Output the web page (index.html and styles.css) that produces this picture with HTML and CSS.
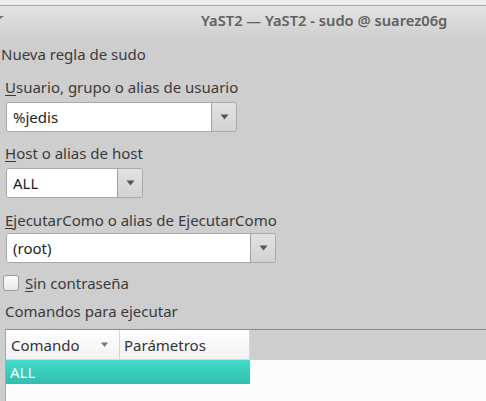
FILE: index.html
```html
<!DOCTYPE html>
<html lang="es">
<head>
<meta charset="utf-8">
<title>YaST2 - sudo</title>
<link rel="stylesheet" href="styles.css">
</head>
<body>
<div class="topstrip"></div>
<header class="titlebar">
  <svg class="menu-mark" width="4" height="4" viewBox="0 0 4 4"><path d="M0 0H4L0 3Z" fill="#777"/></svg>
  <span class="title">YaST2 — YaST2 - sudo @ suarez06g</span>
</header>
<main class="content">
  <div class="heading">Nueva regla de sudo</div>

  <div class="label label-user"><u>U</u>suario, grupo o alias de usuario</div>
  <div class="combo combo-user">
    <div class="combo-text">%jedis</div>
    <div class="combo-btn"><svg width="9" height="6" viewBox="0 0 9 6"><path d="M0.5 0.5H8.5L4.5 5.5Z" fill="#555"/></svg></div>
  </div>

  <div class="label label-host"><u>H</u>ost o alias de host</div>
  <div class="combo combo-host">
    <div class="combo-text">ALL</div>
    <div class="combo-btn"><svg width="9" height="6" viewBox="0 0 9 6"><path d="M0.5 0.5H8.5L4.5 5.5Z" fill="#555"/></svg></div>
  </div>

  <div class="label label-runas"><u>E</u>jecutarComo o alias de EjecutarComo</div>
  <div class="combo combo-runas">
    <div class="combo-text">(root)</div>
    <div class="combo-btn"><svg width="9" height="6" viewBox="0 0 9 6"><path d="M0.5 0.5H8.5L4.5 5.5Z" fill="#555"/></svg></div>
  </div>

  <label class="check-row">
    <span class="checkbox"></span>
    <span class="check-label"><u>S</u>in contraseña</span>
  </label>

  <div class="label label-cmds">Comandos para ejecutar</div>
  <div class="table">
    <div class="thead">
      <div class="th th-cmd"><span>Comando</span><svg width="9" height="6" viewBox="0 0 9 6"><path d="M1 0.5H8L4.5 5Z" fill="#777"/></svg></div>
      <div class="th th-params">Parámetros</div>
    </div>
    <div class="tbody">
      <div class="row row-selected"><div class="td">ALL</div></div>
    </div>
  </div>
</main>
</body>
</html>
```

FILE: styles.css
```css
* { box-sizing: border-box; }
html, body {
  margin: 0;
  padding: 0;
  width: 486px;
  height: 401px;
  overflow: hidden;
}
body {
  background: #cecece;
  font-family: "Noto Sans", "DejaVu Sans", sans-serif;
  font-size: 15px;
  line-height: 20px;
  color: #3a3a3a;
}
u { text-decoration-thickness: 1px; text-underline-offset: 2px; }

.topstrip {
  height: 6px;
  background: #efefef;
  border-bottom: 1px solid #a3a3a3;
}
.titlebar {
  height: 34px;
  display: flex;
  align-items: flex-start;
  background: linear-gradient(#e3e3e3, #d0d0d0 90%, #cecece);
  padding-top: 4px;
}
.menu-mark { margin-top: 6px; flex: none; }
.title {
  margin-left: 197px;
  font-size: 14.7px;
  font-weight: 600;
  color: #606060;
  white-space: nowrap;
}

.content { padding: 0; }
.heading { margin: 4px 0 0 1px; }
.label { margin-left: 5px; white-space: nowrap; }
.label-user { margin-top: 13px; }
.label-host { margin-top: 11px; }
.label-runas { margin-top: 12px; }
.label-cmds { margin-top: 8px; }

.combo {
  display: flex;
  height: 30px;
  margin-left: 6px;
  border: 1px solid #a9a9a9;
  border-radius: 3px;
  overflow: hidden;
  color: #1e1e1e;
}
.combo-user { width: 231px; margin-top: 5px; }
.combo-host { width: 137px; margin-top: 5px; }
.combo-runas { width: 270px; margin-top: 3px; }
.combo-text {
  flex: 1;
  background: #ffffff;
  padding-left: 6px;
  line-height: 28px;
}
.combo-btn {
  width: 25px;
  flex: none;
  border-left: 1px solid #a0a0a0;
  background: linear-gradient(#e2e2e2, #d2d2d2);
  display: flex;
  align-items: center;
  justify-content: center;
}

.check-row {
  display: flex;
  align-items: center;
  margin-top: 10px;
  margin-left: 3px;
  height: 20px;
}
.checkbox {
  width: 16px;
  height: 16px;
  border: 1px solid #9c9c9c;
  border-radius: 3px;
  background: linear-gradient(#fbfbfb, #e9e9e9);
  flex: none;
}
.check-label { margin-left: 6px; }

.table {
  margin-top: 8px;
  margin-left: 5px;
  border-top: 1px solid #8c8c8c;
  border-left: 1px solid #a8a8a8;
  height: 80px;
}
.thead {
  display: flex;
  height: 30px;
}
.th {
  height: 30px;
  background: linear-gradient(#fefefe, #f2f2f2);
  border-right: 1px solid #d6d6d6;
  border-bottom: 1px solid #d8d8d8;
  display: flex;
  align-items: center;
  padding-left: 5px;
  color: #333;
}
.th-cmd { width: 114px; justify-content: space-between; padding-right: 10px; }
.th-params { width: 130px; padding-left: 4px; }
.tbody {
  background: #fcfcfc;
  height: 50px;
}
.row { display: flex; }
.row-selected .td {
  width: 244px;
  height: 24px;
  background: linear-gradient(#42dac9, #31bead);
  color: #ffffff;
  padding-left: 4px;
  line-height: 24px;
  font-size: 15px;
}
```
